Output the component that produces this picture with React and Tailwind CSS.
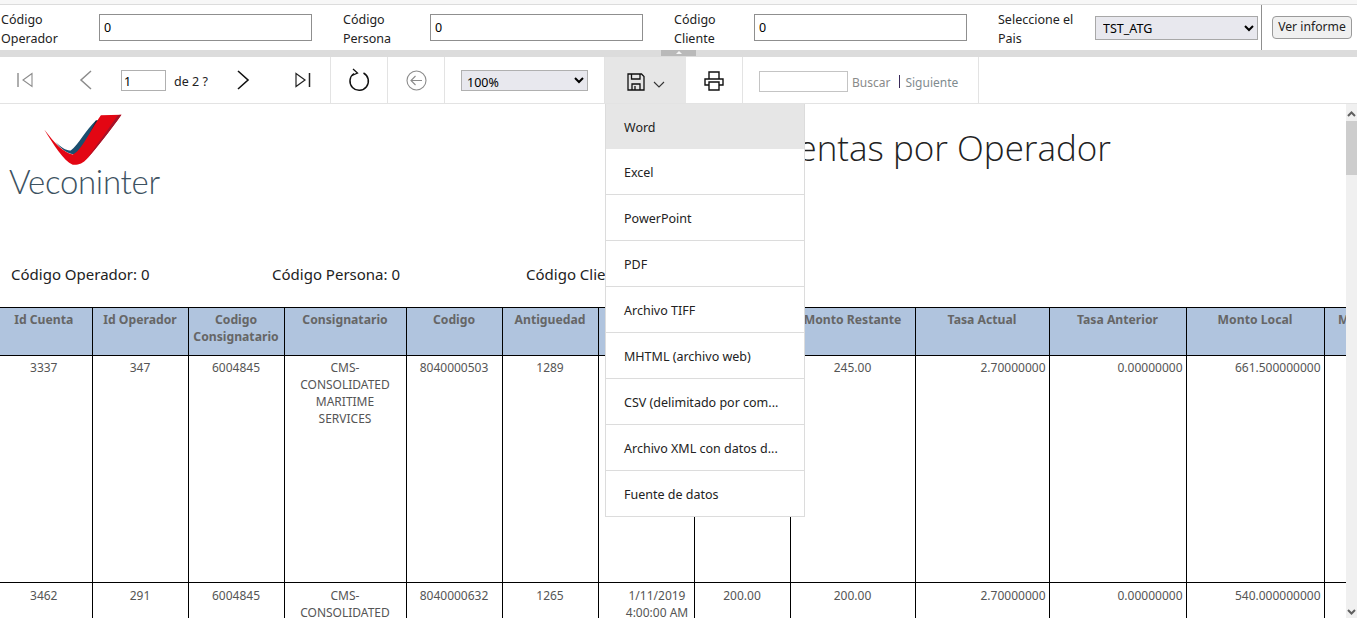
const font = { fontFamily: '"Noto Sans", "Open Sans", sans-serif' };

const cols = [92, 96, 96, 122, 96, 96, 96, 96, 125, 134, 137, 138, 120];

const headers = ["Id Cuenta", "Id Operador", "Codigo Consignatario", "Consignatario", "Codigo", "Antiguedad", "Fecha", "Monto", "Monto Restante", "Tasa Actual", "Tasa Anterior", "Monto Local", "Monto Original"];

const cms = <>CMS-<br />CONSOLIDATED<br />MARITIME<br />SERVICES</>;

const rows = [
  { pad: "pt-[3px]", cells: ["3337", "347", "6004845", cms, "8040000503", "1289", "", "245.00", "245.00", "2.70000000", "0.00000000", "661.500000000", ""] },
  { pad: "pt-[4px]", cells: ["3462", "291", "6004845", cms, "8040000632", "1265", <>1/11/2019<br />4:00:00 AM</>, "200.00", "200.00", "2.70000000", "0.00000000", "540.000000000", ""] },
];

const menu = ["Word", "Excel", "PowerPoint", "PDF", "Archivo TIFF", "MHTML (archivo web)", "CSV (delimitado por com...", "Archivo XML con datos d...", "Fuente de datos"];

function Param({ label, labelW, value }) {
  return (
    <>
      <div className="text-[12.5px] leading-[19px] text-[#222] pt-[2px]" style={{ width: labelW }}>{label}</div>
      <input readOnly value={value} className="w-[213px] h-[27px] border border-[#8f8f8f] bg-white px-[4px] text-[12.5px] text-black outline-none" />
    </>
  );
}

function Divider() {
  return <div className="w-px self-stretch bg-[#e3e3e3]" />;
}

function Logo() {
  return (
    <div className="flex flex-col items-start">
      <svg width="85" height="53" viewBox="120 25 255 160" className="ml-[30px]">
        <path d="M165 112 C185 130 200 140 212 138 C235 122 258 75 288 48 L306 48 L240 150 C205 155 185 135 165 112Z" fill="#1b4e6e" />
        <path d="M288 48 L300 48 L262 100 C275 80 280 62 288 48Z" fill="#16283a" />
        <path d="M132 75 C165 118 190 145 218 150 C240 145 270 80 303 32 L365 30 C330 80 290 130 262 162 C248 178 232 183 218 181 C190 170 160 120 132 75Z" fill="#e30613" />
        <path d="M365 30 C330 80 290 130 262 162 C285 128 325 75 355 31Z" fill="#a3142a" />
      </svg>
      <div className="text-[33px] leading-[36px] font-light text-[#3d5261] -mt-[3px] -ml-px tracking-[-0.3px]" style={{ fontFamily: '"Lato", sans-serif' }}>Veconinter</div>
    </div>
  );
}

export default function App() {
  return (
    <div className="w-[1357px] h-[618px] overflow-hidden flex flex-col bg-white" style={font}>
      <div className="h-[5px] bg-[#f7f7f7] border-b border-[#dcdcdc]" />

      <div className="h-[45px] flex items-center pl-px">
        <Param label={<>Código<br />Operador</>} labelW={98} value="0" />
        <div className="w-[31px]" />
        <Param label={<>Código<br />Persona</>} labelW={87} value="0" />
        <div className="w-[31px]" />
        <Param label={<>Código<br />Cliente</>} labelW={80} value="0" />
        <div className="w-[31px]" />
        <div className="text-[12.5px] leading-[19px] text-[#222] w-[97px] pt-[2px]">Seleccione el<br />Pais</div>
        <select defaultValue="TST_ATG" className="w-[163px] h-[24px] mt-[1px] border border-[#a8a8a8] bg-[#e8e8ee] pl-[3px] text-[12.5px] text-black">
          <option>TST_ATG</option>
        </select>
        <div className="w-px self-stretch ml-[3px] bg-[#8f8f8f]" />
        <button className="ml-[10px] w-[80px] h-[23px] rounded-[4px] border border-[#9a9a9a] bg-[#f0f0f0] pt-[1px] text-[12.2px] text-[#222] -mt-[1px]">Ver informe</button>
      </div>

      <div className="h-[7px] bg-[#dcdcdc] flex justify-center">
        <div className="w-[35px] h-[6px] bg-[#b9b9b9] flex items-start justify-center">
          <svg width="8" height="4" viewBox="0 0 8 4"><path d="M1 4 L4 1 L7 4Z" fill="#f5f5f5" /></svg>
        </div>
      </div>

      <div className="h-[47px] flex items-stretch border-b border-[#e3e3e3] text-[12.5px] text-[#333]">
        <div className="w-[330px] flex items-center relative">
          <svg width="17" height="16" viewBox="0 0 17 16" className="ml-[17px]" fill="none" stroke="#8c8c8c" strokeWidth="1.4"><path d="M1 1V15" /><path d="M15 1.5 L6 8 L15 14.5Z" strokeWidth="1.1" /></svg>
          <svg width="13" height="20" viewBox="0 0 13 20" className="ml-[45px]" fill="none" stroke="#8c8c8c" strokeWidth="1.5"><path d="M12 1 L2 10 L12 19" /></svg>
          <input readOnly value="1" className="ml-[29px] w-[45px] h-[21px] border border-[#b0b0b0] pl-[2px] pt-[3px] text-[12.5px] text-black outline-none" />
          <span className="ml-[8px] w-[63px] pt-[5px] text-[12.5px] text-[#222]">de 2 ?</span>
          <svg width="13" height="20" viewBox="0 0 13 20" fill="none" stroke="#111" strokeWidth="1.6"><path d="M1 1 L11 10 L1 19" /></svg>
          <svg width="18" height="16" viewBox="0 0 18 16" className="ml-[44px]" fill="none"><path d="M2 1.5 L11 8 L2 14.5Z" stroke="#222" strokeWidth="1.2" /><path d="M15.5 1V15" stroke="#222" strokeWidth="1.5" /></svg>
        </div>
        <Divider />
        <div className="w-[56px] flex items-center justify-center">
          <svg width="22" height="24" viewBox="0 0 22 24" fill="none" stroke="#111" strokeWidth="1.5"><path d="M6 5.5 A9.2 9.2 0 1 0 15.5 5" /><path d="M5 1 L9.5 5 L4 7.5" strokeWidth="1.3" /></svg>
        </div>
        <Divider />
        <div className="w-[56px] flex items-center justify-center">
          <svg width="21" height="21" viewBox="0 0 21 21" fill="none" stroke="#8c8c8c" strokeWidth="1.1"><circle cx="10.5" cy="10.5" r="9.5" /><path d="M16 10.5 H5 M9.5 6 L5 10.5 L9.5 15" /></svg>
        </div>
        <Divider />
        <div className="w-[159px] flex items-center pl-[16px]">
          <select defaultValue="100%" className="w-[127px] h-[21px] border border-[#b0b0b0] bg-[#e8e8ee] pl-[1px] pt-[2px] text-[12.5px] text-black">
            <option>100%</option>
          </select>
        </div>
        <div className="w-[82px] bg-[#e6e6e6] flex items-center pl-[22px] border-l border-[#e3e3e3]">
          <svg width="18" height="18" viewBox="0 0 18 18" className="mt-[3px]" fill="none" stroke="#111" strokeWidth="1.3"><path d="M1 1 H14.5 L17 3.5 V17 H1Z" /><path d="M4.5 1 V6 H13 V1" /><path d="M5 17 V11 H13 V17" /><path d="M8 13 V17" /></svg>
          <svg width="12" height="7" viewBox="0 0 12 7" className="ml-[8px] mt-[9px]" fill="none" stroke="#333" strokeWidth="1.1"><path d="M1 1 L6 6 L11 1" /></svg>
        </div>
        <div className="w-[56px] flex items-center justify-center pr-px">
          <svg width="20" height="20" viewBox="0 0 20 20" className="mt-[1px]" fill="none" stroke="#111" strokeWidth="1.4"><path d="M5 8 V1 H15 V8" /><path d="M5 14 H1 V8 H19 V14 H15" /><path d="M5 11 H15 V19 H5Z" /></svg>
        </div>
        <Divider />
        <div className="w-[235px] flex items-center pl-[16px] pt-[2px]">
          <input readOnly className="w-[89px] h-[21px] border border-[#c4c4c4] outline-none" />
          <span className="ml-[4px] text-[#8a8a8a] text-[12px] pt-[4px]">Buscar</span>
          <span className="ml-[9px] w-px h-[13px] bg-[#3a2a5a]" />
          <span className="ml-[5px] text-[#7f8b8f] text-[12px] pt-[4px]">Siguiente</span>
        </div>
        <Divider />
      </div>

      <div className="flex-1 min-h-0 flex relative">
        <div className="flex-1 min-w-0 overflow-hidden">
          <div className="flex items-start h-[203px] pl-[10px] pt-[9px]">
            <Logo />
            <div className="ml-auto mr-[235px] mt-[13px] text-[35px] leading-[44px] font-light text-[#222] whitespace-nowrap" style={{ fontFamily: '"Open Sans", sans-serif' }}>Cuentas por Operador</div>
          </div>
          <div className="flex items-center h-[24px] mt-[-45px] pl-[11px] text-[15px] text-[#222]">
            <span className="w-[261px]">Código Operador: 0</span>
            <span className="w-[254px]">Código Persona: 0</span>
            <span>Código Cliente: 0</span>
          </div>
          <div className="h-[21px]" />
          <table className="border-collapse table-fixed w-[1444px] text-[12px] leading-[17px]">
            <colgroup>
              {cols.map((w, i) => <col key={i} style={{ width: w }} />)}
            </colgroup>
            <thead>
              <tr className="h-[48px] bg-[#b0c4de]">
                {headers.map((h, i) => (
                  <th key={i} className="border border-black align-top pt-[3px] px-[2px] text-center text-[12.2px] font-bold text-[#666] first:border-l-0 first:pl-0 first:pr-[4px]">{h}</th>
                ))}
              </tr>
            </thead>
            <tbody>
              {rows.map((r, ri) => (
                <tr key={ri} className="h-[227px]">
                  {r.cells.map((c, i) => (
                    <td key={i} className={`border border-black align-top ${r.pad} text-[#555] first:border-l-0 first:pl-0 first:pr-[4px] ${i === 6 ? "pl-[25px] pr-[3px]" : "px-[3px]"} ${i >= 9 && i <= 11 ? "text-right" : "text-center"}`}>{c}</td>
                  ))}
                </tr>
              ))}
            </tbody>
          </table>
        </div>

        <div className="w-[11px] bg-[#f0f0f0] flex flex-col items-center justify-between pt-[7px] pb-[3px] relative">
          <svg width="9" height="6" viewBox="0 0 9 6" fill="none" stroke="#606060" strokeWidth="2"><path d="M1 5 L4.5 1.5 L8 5" /></svg>
          <div className="absolute top-[17px] left-0 w-full h-[54px] bg-[#cdcdcd]" />
          <svg width="9" height="6" viewBox="0 0 9 6" fill="none" stroke="#606060" strokeWidth="2"><path d="M1 1 L4.5 4.5 L8 1" /></svg>
        </div>

        <div className="absolute left-[605px] top-0 w-[200px] bg-white border border-t-0 border-[#dcdcdc] text-[12.5px] text-[#222]">
          {menu.map((m, i) => (
            <div key={m} className={`flex items-center pl-[18px] pt-[4px] whitespace-nowrap ${i === 0 ? "h-[45px] bg-[#e6e6e6]" : i === 1 ? "h-[45px]" : "h-[46px] border-t border-[#dcdcdc]"}`}>{m}</div>
          ))}
        </div>
      </div>
    </div>
  );
}
